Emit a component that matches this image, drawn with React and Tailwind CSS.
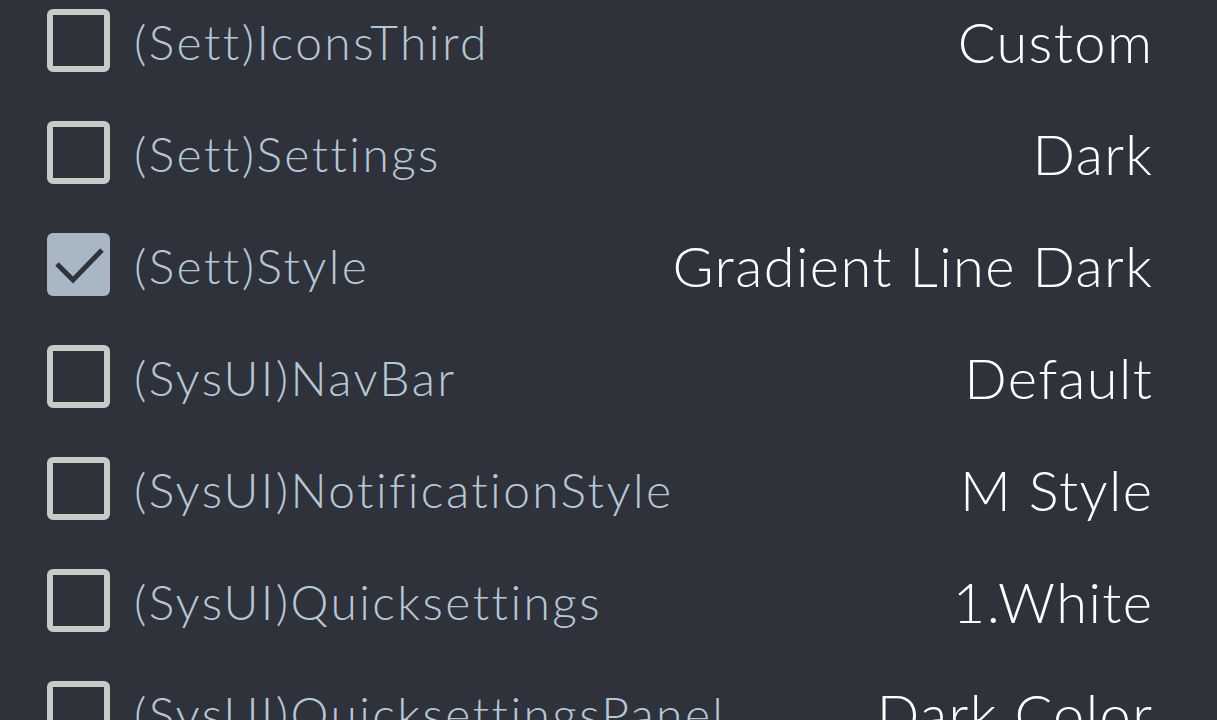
import React from 'react';

const ROWS = [
  { label: '(Sett)IconsThird', value: 'Custom', checked: false },
  { label: '(Sett)Settings', value: 'Dark', checked: false },
  { label: '(Sett)Style', value: 'Gradient Line Dark', checked: true },
  { label: '(SysUI)NavBar', value: 'Default', checked: false },
  { label: '(SysUI)NotificationStyle', value: 'M Style', checked: false },
  { label: '(SysUI)Quicksettings', value: '1.White', checked: false },
  { label: '(SysUI)QuicksettingsPanel', value: 'Dark Color', checked: false },
];

function Checkbox({ checked }) {
  if (checked) {
    return (
      <div className="w-[63px] h-[63px] rounded-[6px] bg-[#a9b6c3] shrink-0">
        <svg width="63" height="63" viewBox="0 0 63 63">
          <path d="M10 31 L26 47 L55 17" fill="none" stroke="#30333b" strokeWidth="5" />
        </svg>
      </div>
    );
  }
  return <div className="w-[63px] h-[63px] rounded-[6px] border-[6px] border-[#c9c9c9] shrink-0" />;
}

export default function App() {
  return (
    <div className="w-[1217px] h-[720px] bg-[#2f323a] overflow-hidden font-['Lato',sans-serif]">
      <div className="-mt-[16px] pl-[47px] pr-[65px]">
        {ROWS.map((row) => (
          <div key={row.label} className="h-[112px] flex items-center">
            <Checkbox checked={row.checked} />
            <span className="ml-[24px] mt-[4px] text-[48px] font-light tracking-[2.4px] text-[#b5c7d6] leading-none">{row.label}</span>
            <span className="ml-auto mt-[4px] text-[56px] font-light tracking-[1.4px] -mr-[1.4px] text-white leading-none">{row.value}</span>
          </div>
        ))}
      </div>
    </div>
  );
}
